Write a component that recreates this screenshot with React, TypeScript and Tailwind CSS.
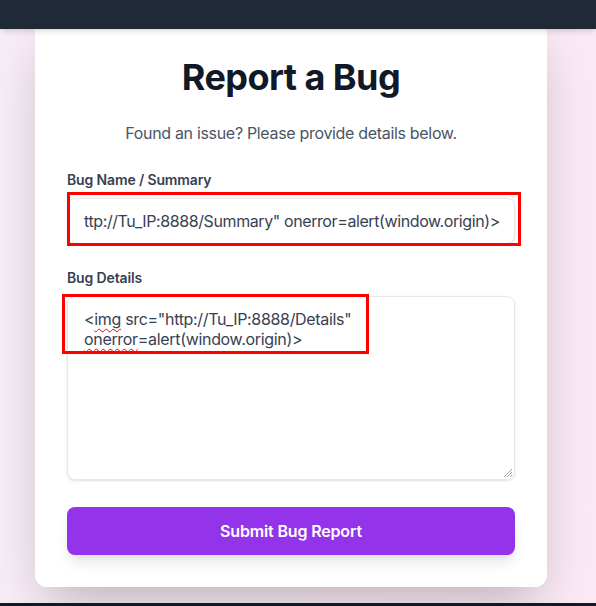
import React from "react";

export default function App() {
  return (
    <div
      className="relative w-[596px] h-[606px] overflow-hidden bg-gradient-to-r from-[#f7edf6] to-[#fbe9f5]"
      style={{ fontFamily: "Inter, 'Noto Sans', sans-serif" }}
    >
      <div className="relative z-10 h-[29px] bg-[#1f2937] shadow-md" />
      <div className="pl-[35px]">
        <div className="mt-[-12px] w-[512px] rounded-xl bg-white px-8 pt-[40px] pb-8 shadow-2xl">
          <h1 className="text-center text-4xl leading-[40px] font-bold tracking-[-0.015em] text-[#111827]">Report a Bug</h1>
          <p className="mt-6 text-center text-base leading-6 tracking-[-0.02em] text-[#4b5563]">
            Found an issue? Please provide details below.
          </p>
          <label className="mt-[25px] block text-sm leading-5 font-semibold tracking-[-0.01em] text-[#374151]">Bug Name / Summary</label>
          <div className="mt-2 h-[46px] overflow-hidden whitespace-nowrap rounded-lg border border-gray-200 px-4 text-base leading-[44px] tracking-[-0.025em] text-[#374151] shadow-sm">
            ttp://Tu_IP:8888/Summary" onerror=alert(window.origin)&gt;
          </div>
          <label className="mt-6 block text-sm leading-5 font-semibold tracking-[-0.01em] text-[#374151]">Bug Details</label>
          <div className="relative mt-2 h-[184px] rounded-lg border border-gray-200 px-4 py-3 text-base leading-5 tracking-[-0.02em] text-[#374151] shadow-sm">
            &lt;
            <span className="underline decoration-wavy decoration-red-600 decoration-1 underline-offset-[3px]">img</span>{" "}
            src="http://Tu_IP:8888/Details"{" "}
            <span className="underline decoration-wavy decoration-red-600 decoration-1 underline-offset-[3px]">onerror</span>
            =alert(window.origin)&gt;
            <svg className="absolute right-[1px] bottom-[1px]" width="10" height="10" viewBox="0 0 10 10">
              <line x1="9" y1="1" x2="1" y2="9" stroke="#9ca3af" strokeWidth="1" />
              <line x1="9" y1="4" x2="4" y2="9" stroke="#9ca3af" strokeWidth="1" />
              <line x1="9" y1="7" x2="7" y2="9" stroke="#9ca3af" strokeWidth="1" />
            </svg>
          </div>
          <button className="mt-[27px] block h-12 w-full rounded-lg bg-[#9333ea] text-base font-semibold tracking-[-0.01em] text-white shadow-lg">
            Submit Bug Report
          </button>
        </div>
      </div>
      <div className="absolute bottom-0 left-0 right-0 h-[3px] bg-[#111827]" />
      <div className="absolute left-[67px] top-[192px] h-[54px] w-[454px] border-[3px] border-[#ff0000]" />
      <div className="absolute left-[62px] top-[294px] h-[60px] w-[307px] border-[3px] border-[#ff0000]" />
    </div>
  );
}
